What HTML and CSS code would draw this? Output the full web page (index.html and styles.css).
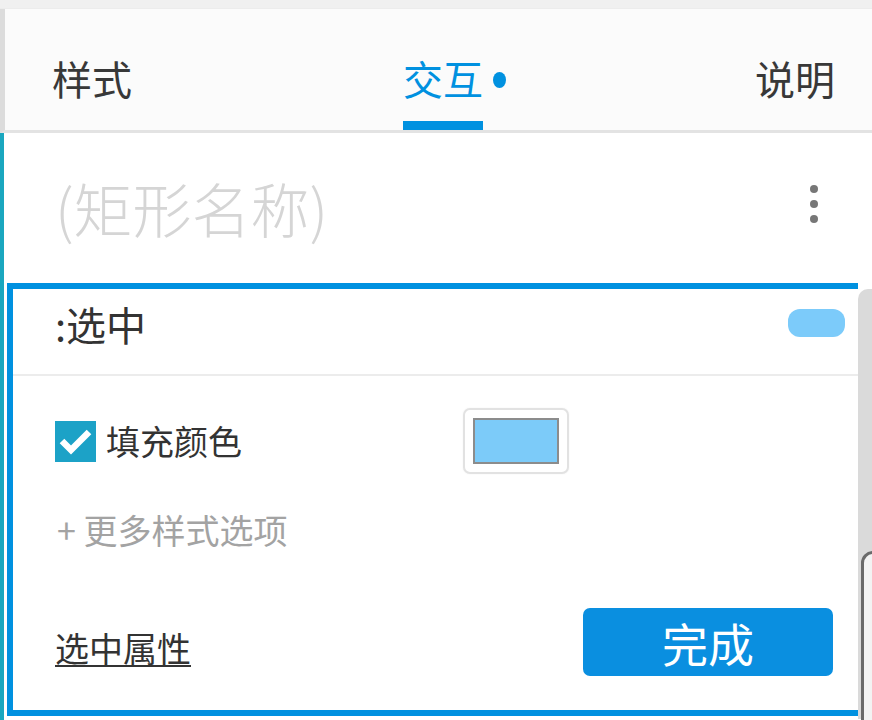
FILE: index.html
```html
<!DOCTYPE html>
<html lang="zh-CN">
<head>
<meta charset="utf-8">
<title>交互</title>
<link rel="stylesheet" href="styles.css">
</head>
<body>
<div class="app">
  <div class="top-strip"></div>
  <div class="tabs">
    <div class="tab">样式</div>
    <div class="tab active">交互<span class="tab-dot"></span></div>
    <div class="tab tab-right">说明</div>
  </div>
  <div class="body">
    <div class="name-row">
      <div class="name">(矩形名称)</div>
      <div class="kebab"><span></span><span></span><span></span></div>
    </div>
    <div class="panel-row">
      <div class="panel">
        <div class="panel-head">
          <div class="state-name">:选中</div>
          <div class="pill"></div>
        </div>
        <div class="panel-content">
          <div class="fill-row">
            <label class="check-label">
              <span class="checkbox">
                <svg width="41" height="41" viewBox="0 0 41 41"><path d="M7 20 L16 29 L34 11" fill="none" stroke="#fff" stroke-width="6.5" stroke-linejoin="miter"/></svg>
              </span>
              <span class="check-text">填充颜色</span>
            </label>
            <div class="swatch"><div class="swatch-inner"></div></div>
          </div>
          <div class="more">+ 更多样式选项</div>
          <div class="footer">
            <a class="prop-link">选中属性</a>
            <button class="done">完成</button>
          </div>
        </div>
      </div>
      <div class="scroll-track"></div>
    </div>
    <div class="peek"></div>
  </div>
</div>
</body>
</html>
```
FILE: styles.css
```css
* { box-sizing: border-box; }
html, body { margin: 0; padding: 0; }
body {
  width: 872px;
  height: 720px;
  overflow: hidden;
  background: #fff;
  font-family: "Noto Sans CJK SC", "Noto Sans", sans-serif;
  color: #333;
}
.app {
  display: flex;
  flex-direction: column;
  height: 720px;
}
.top-strip {
  height: 9px;
  background: #f0f0f0;
  border-bottom: 1px solid #ececec;
}
.tabs {
  height: 124px;
  display: flex;
  align-items: flex-start;
  background: #fbfbfb;
  border-left: 5px solid #dcdcdc;
  border-bottom: 3px solid #e3e3e3;
  padding-left: 47px;
  padding-right: 37px;
}
.tab {
  font-size: 40px;
  line-height: 64px;
  padding-top: 37px;
  color: #383838;
  position: relative;
}
.tab.active {
  color: #0091e0;
  margin-left: 271px;
  border-bottom: 9px solid #0091e0;
  padding-bottom: 11px;
}
.tab-dot {
  position: absolute;
  right: -23px;
  top: 63px;
  width: 13px;
  height: 16px;
  border-radius: 50%;
  background: #0091e0;
}
.tab-right { margin-left: auto; }

.body {
  flex: 1;
  position: relative;
  border-left: 4px solid #1aa7bf;
  background: #fff;
  display: flex;
  flex-direction: column;
}
.name-row {
  height: 150px;
  display: flex;
  align-items: center;
  padding-left: 51px;
  padding-right: 54px;
}
.name {
  font-size: 59px;
  line-height: 80px;
  color: #d5d5d5;
  font-weight: 300;
}
.kebab {
  margin-left: auto;
  display: flex;
  flex-direction: column;
  gap: 7px;
  margin-top: -8px;
}
.kebab span {
  width: 8px;
  height: 8px;
  border-radius: 50%;
  background: #777;
}
.panel-row {
  display: flex;
  height: 436px;
}
.panel {
  margin-left: 3px;
  width: 851px;
  height: 433px;
  border: 6px solid #0091e0;
  border-right: none;
  display: flex;
  flex-direction: column;
}
.panel-head {
  height: 87px;
  display: flex;
  align-items: flex-start;
  padding: 7px 13px 0 42px;
  border-bottom: 2px solid #ececec;
}
.state-name {
  font-size: 40px;
  line-height: 56px;
  color: #333;
}
.pill {
  margin-left: auto;
  margin-top: 13px;
  width: 57px;
  height: 28px;
  border-radius: 12px;
  background: #7ccbfa;
}
.panel-content {
  padding: 32px 25px 0 42px;
  display: flex;
  flex-direction: column;
}
.fill-row {
  display: grid;
  grid-template-columns: 408px auto;
  align-items: center;
  justify-content: start;
}
.check-label {
  display: flex;
  align-items: center;
  gap: 10px;
}
.checkbox {
  width: 41px;
  height: 41px;
  background: #1ca2c7;
  display: block;
}
.checkbox svg { display: block; }
.check-text {
  font-size: 34px;
  line-height: 48px;
  color: #333;
}
.swatch {
  width: 106px;
  height: 66px;
  border: 2px solid #e2e2e2;
  border-radius: 7px;
  padding: 8px;
  background: #fff;
  box-shadow: 0 0 2px rgba(0,0,0,0.06);
}
.swatch-inner {
  width: 86px;
  height: 46px;
  background: #7ccbf9;
  border: 2px solid #8c8c8c;
}
.more {
  margin-top: 32px;
  font-size: 34px;
  line-height: 48px;
  color: #a3a3a3;
  padding-left: 2px;
}
.footer {
  margin-top: 54px;
  display: flex;
  justify-content: space-between;
  align-items: center;
}
.prop-link {
  font-size: 34px;
  line-height: 48px;
  color: #333;
  text-decoration: underline;
  text-underline-offset: 3px;
  text-decoration-thickness: 2px;
  padding-top: 12px;
}
.done {
  width: 250px;
  height: 68px;
  border: none;
  border-radius: 7px;
  background: #0a8fe0;
  color: #fff;
  font-family: "Noto Sans CJK SC", "Noto Sans", sans-serif;
  font-size: 46px;
  line-height: 68px;
  padding: 0;
}
.scroll-track {
  flex: 1;
  margin-top: 6px;
  background: #dadada;
  border-top-left-radius: 10px;
}
.peek {
  position: absolute;
  left: 857px;
  top: 418px;
  width: 30px;
  height: 200px;
  border: 3px solid #6a6a6a;
  border-radius: 12px;
  background: #f3f3f3;
}
```
